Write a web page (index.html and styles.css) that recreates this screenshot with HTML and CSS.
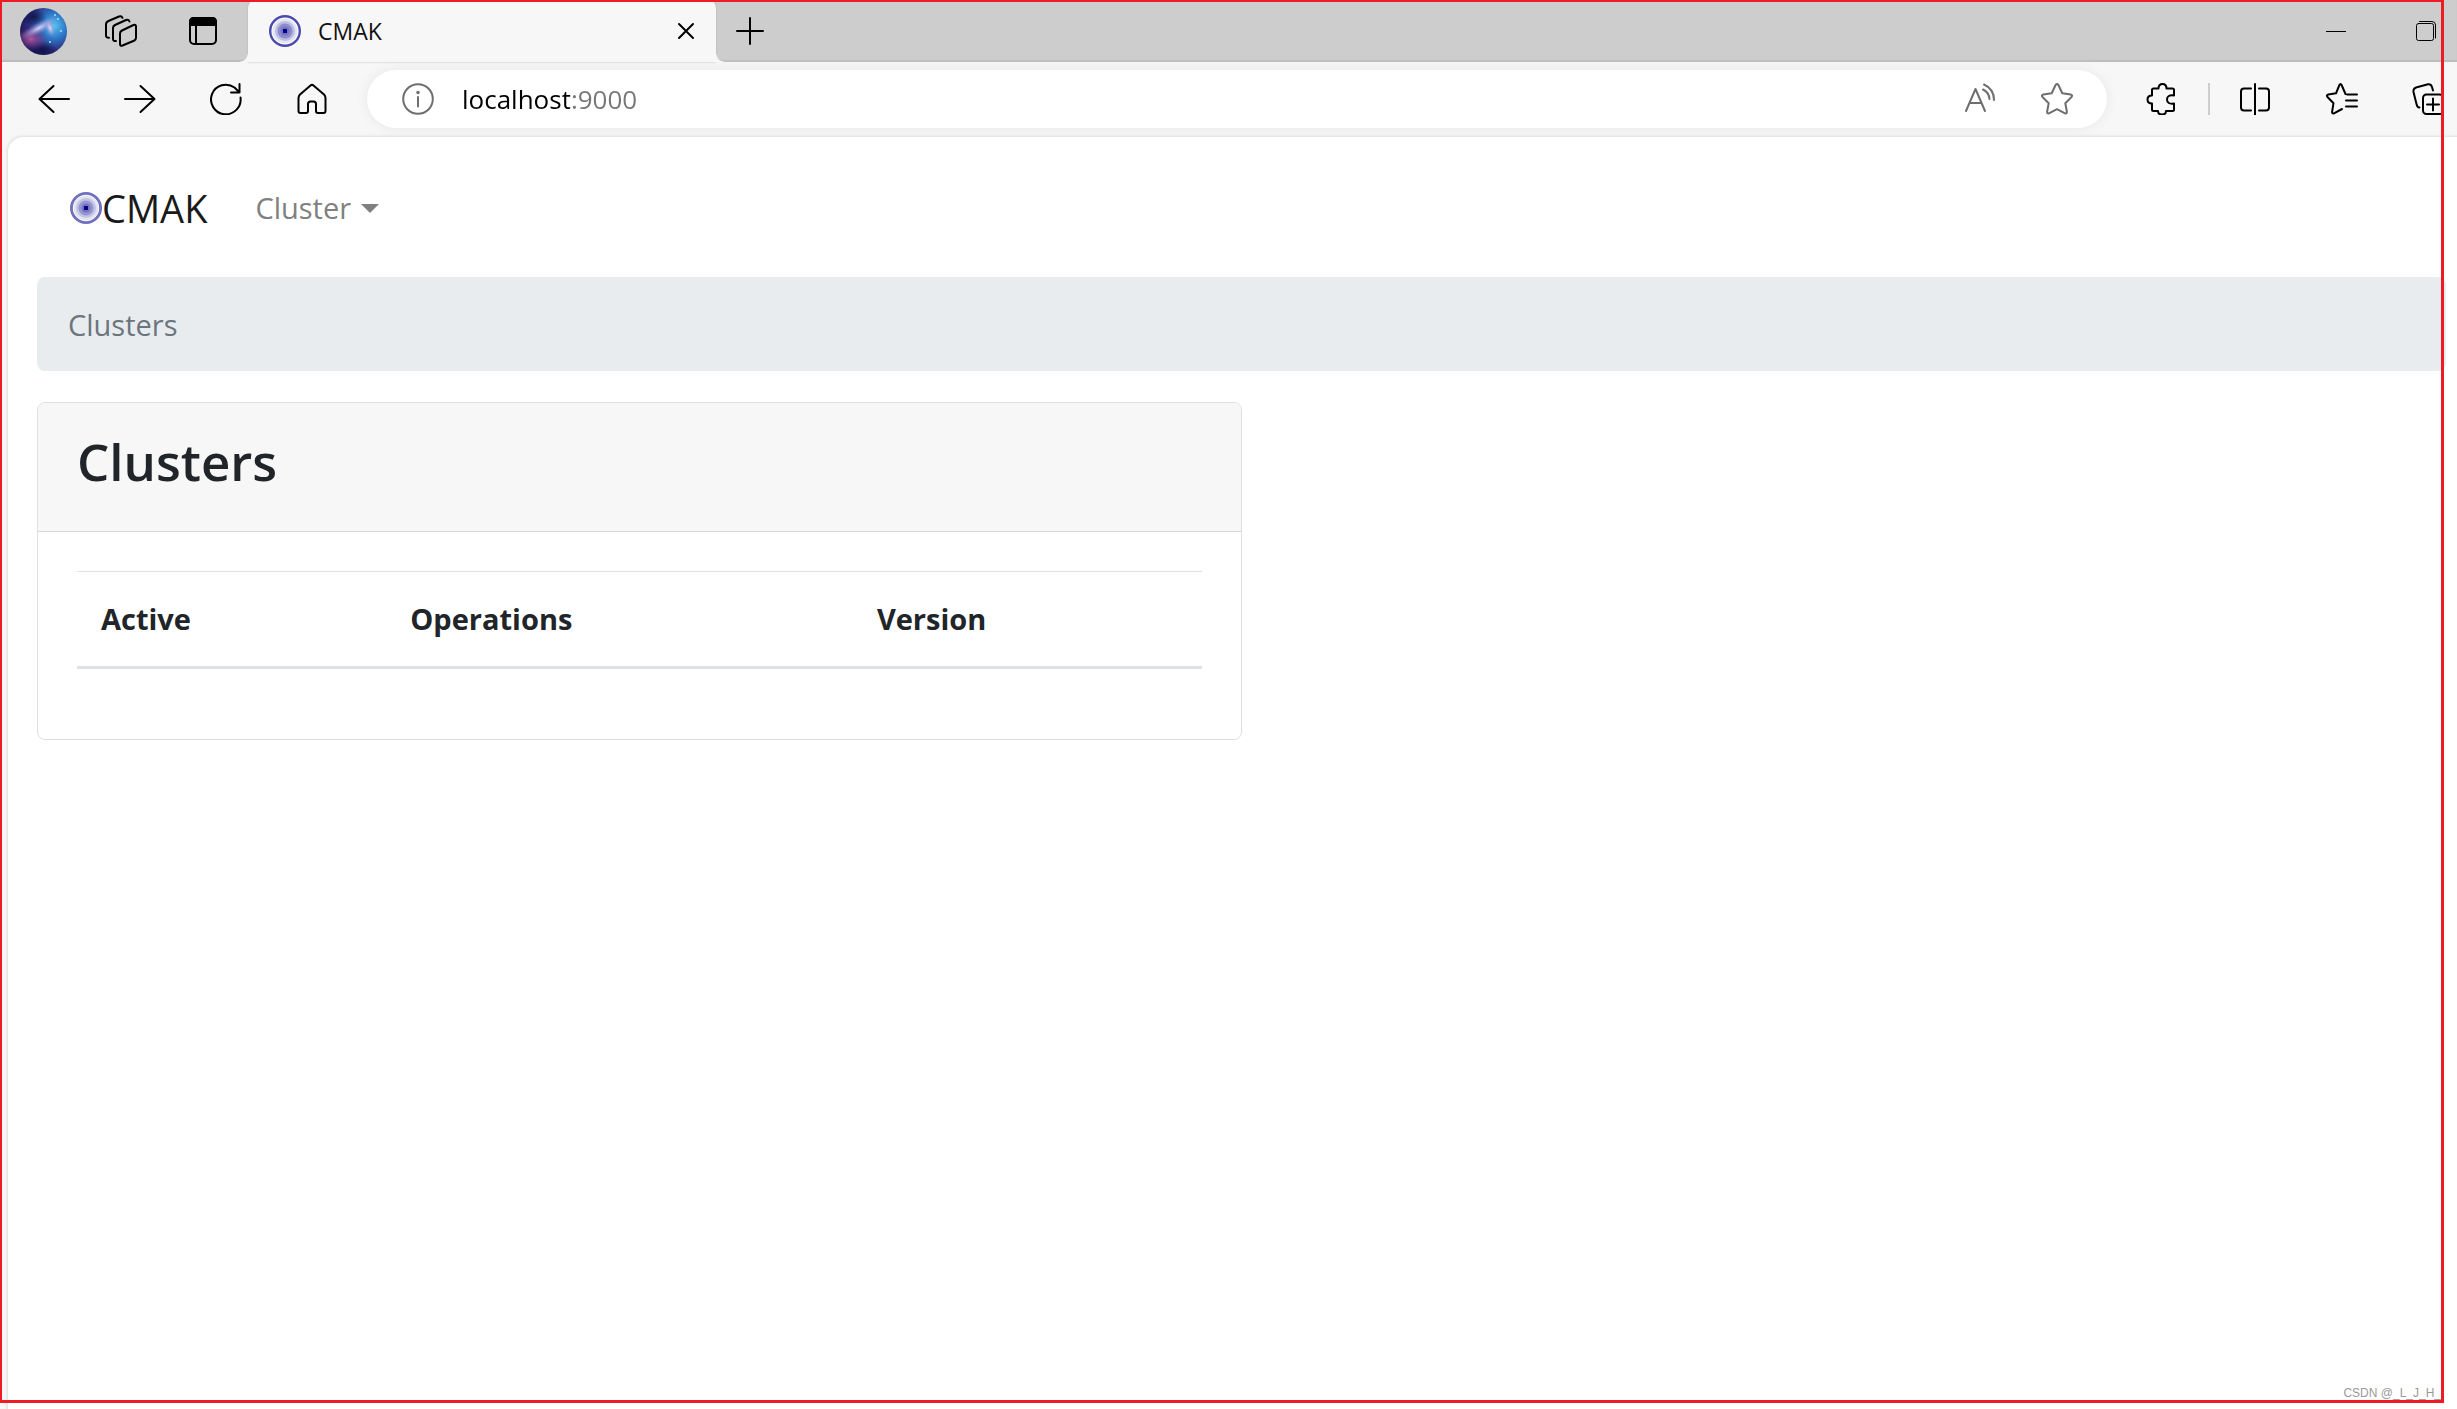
FILE: index.html
```html
<!DOCTYPE html>
<html lang="en">
<head>
<meta charset="utf-8">
<title>CMAK</title>
<link rel="stylesheet" href="styles.css">
</head>
<body>
<svg class="defs" aria-hidden="true">
  <defs>
    <radialGradient id="sky" cx="72%" cy="38%" r="75%">
      <stop offset="0" stop-color="#58c4f0"/><stop offset=".35" stop-color="#2f78c8"/><stop offset=".7" stop-color="#2d2d80"/><stop offset="1" stop-color="#1b1650"/>
    </radialGradient>
    <radialGradient id="dust"><stop offset="0" stop-color="#b8579f" stop-opacity=".95"/><stop offset="1" stop-color="#70307c" stop-opacity="0"/></radialGradient>
    <radialGradient id="glow"><stop offset="0" stop-color="#ecdcf8" stop-opacity=".95"/><stop offset="1" stop-color="#8a7fd0" stop-opacity="0"/></radialGradient>
    <radialGradient id="night"><stop offset="0" stop-color="#0b0d3c" stop-opacity=".8"/><stop offset="1" stop-color="#0b0d3c" stop-opacity="0"/></radialGradient>
  </defs>
</svg>
<div class="window">
  <header class="titlebar">
    <button class="avatar" aria-label="Profile">
      <svg width="47" height="47" viewBox="0 0 47 47">
        <clipPath id="disc"><circle cx="23.5" cy="23.5" r="23.5"/></clipPath>
        <g clip-path="url(#disc)">
          <rect width="47" height="47" fill="url(#sky)"/>
          <ellipse cx="23" cy="42" rx="15" ry="9" fill="url(#night)"/>
          <ellipse cx="14" cy="9" rx="13" ry="9" fill="url(#night)"/>
          <ellipse cx="11" cy="31" rx="17" ry="12" fill="url(#dust)"/>
          <ellipse cx="19" cy="20" rx="22" ry="6" transform="rotate(-28 19 20)" fill="url(#glow)"/>
          <ellipse cx="30" cy="20" rx="5" ry="10" transform="rotate(-20 30 20)" fill="url(#glow)"/>
          <g fill="#9fe4ff"><circle cx="38" cy="11" r="1"/><circle cx="41" cy="23" r="1"/><circle cx="30" cy="34" r="1"/><circle cx="35" cy="7" r="1"/></g>
        </g>
      </svg>
    </button>
    <button class="tool workspaces" aria-label="Workspaces">
      <svg class="line" width="32" height="32" viewBox="0 0 32 32">
        <path d="M17 15.500 28.500 10Q31 9 31 11.500V22.500Q31 24.500 29.500 25.500L17.500 30.500Q15 31.300 15 29V18.500Q15 16.500 17 15.500Z"/>
        <path d="M24.500 6.500Q23.500 4 21 5L10 10Q8 11 8 13V24Q8 26.500 11 26M17.500 2.800Q16.500.5 14 1.500L3.500 6Q1 7 1 9.500V20.500Q1 23 4 22.800"/>
      </svg>
    </button>
    <button class="tool" aria-label="Tab actions">
      <svg class="line" width="28" height="28" viewBox="0 0 28 28">
        <rect x="1" y="1" width="26" height="26" rx="4"/><path d="M7 8V27"/><path class="solid" d="M1 8V5Q1 1 5 1H23Q27 1 27 5V8Z"/>
      </svg>
    </button>
    <div class="tab">
      <svg width="32" height="32" viewBox="0 0 32 32">
        <circle cx="16" cy="16" r="14.800" fill="#fff" stroke="#4a4aac" stroke-width="2.400"/>
        <circle cx="16" cy="16" r="12.500" fill="#e5e5f5"/><circle cx="16" cy="16" r="10" fill="#bdbde3"/><circle cx="16" cy="16" r="7.500" fill="#8c8ccc"/><circle cx="16" cy="16" r="4.500" fill="#7373c2"/><rect x="14" y="14" width="4" height="4" fill="#00008b"/>
      </svg>
      <span class="tab-title">CMAK</span>
      <button class="close" aria-label="Close tab">
        <svg class="line" width="18" height="18" viewBox="0 0 18 18"><path d="M2 2 16 16M16 2 2 16"/></svg>
      </button>
    </div>
    <button class="new-tab" aria-label="New tab">
      <svg class="line" width="28" height="28" viewBox="0 0 28 28"><path d="M14 1V27M1 14H27"/></svg>
    </button>
    <div class="window-controls">
      <button class="minimise" aria-label="Minimise"><svg width="20" height="20" viewBox="0 0 20 20"><path d="M0 10H20V11H0Z"/></svg></button>
      <button class="edge restore" aria-label="Restore">
        <svg class="hair" width="20" height="20" viewBox="0 0 20 20"><rect x=".5" y="2.500" width="17" height="17" rx="2"/><path d="M3.500.5H16Q19.500.5 19.500 4V17"/></svg>
      </button>
    </div>
  </header>

  <div class="toolbar">
    <button class="nav-btn" aria-label="Back"><svg class="line" width="32" height="32" viewBox="0 0 32 32"><path d="M15.500 3 1.500 16 15.500 29M1.500 16H31"/></svg></button>
    <button class="nav-btn" aria-label="Forward"><svg class="line" width="32" height="32" viewBox="0 0 32 32"><path d="M16.500 3 30.500 16 16.500 29M30.500 16H1"/></svg></button>
    <button class="nav-btn" aria-label="Refresh"><svg class="line" width="32" height="32" viewBox="0 0 32 32"><path d="M30.500 14.500A14.800 14.800 0 1 1 24.500 4.500L29.500 9.500M29.500 1V9.500H21"/></svg></button>
    <button class="nav-btn" aria-label="Home"><svg class="line" width="32" height="32" viewBox="0 0 32 32"><path d="M14.500 2.500Q16 1 17.500 2.500L28 11.500Q29.500 13 29.500 15V28Q29.500 30 27.500 30H22Q20 30 20 28V21Q20 18.500 17.500 18.500H14.500Q12 18.500 12 21V28Q12 30 10 30H4.500Q2.500 30 2.500 28V15Q2.500 13 4 11.500Z"/></svg></button>
    <div class="address">
      <button class="address-btn" aria-label="Site information"><svg class="line muted" width="32" height="32" viewBox="0 0 32 32"><circle cx="16" cy="16" r="14.800"/><path d="M16 14V23.500"/><circle class="solid" cx="16" cy="9.500" r=".8"/></svg></button>
      <input class="url" type="text" value="localhost:9000" aria-label="Address" spellcheck="false">
      <button class="address-btn" aria-label="Read aloud"><svg class="line muted" width="32" height="32" viewBox="0 0 32 32"><path d="M3 28 12.500 6 22 28M6.500 20H18.500M20 6.500Q26 9.500 26.500 16M21 1.500Q31 6 31 17"/></svg></button>
      <button class="address-btn" aria-label="Add to favourites"><svg class="line muted" width="32" height="32" viewBox="0 0 32 32"><path d="M14.600 2Q16 0 17.400 2L21.300 10.300 29.700 11.500Q32 12.200 30.500 14L24.300 20.200 25.900 28.800Q26 31 24 30.300L16 26.200 8 30.300Q6 31 6.100 28.800L7.700 20.200 1.500 14Q0 12.200 2.300 11.500L10.700 10.300Z"/></svg></button>
    </div>
    <button class="nav-btn" aria-label="Extensions"><svg class="line" width="32" height="32" viewBox="0 0 32 32"><path d="M7.500 5.500H12.500Q12.500 1 16.500 1T20.500 5.500H26.500Q28 5.500 28 7V12.500Q21 11.500 21 16.500T28 20.500V26.500Q28 28 26.500 28H20Q20 31.500 16 31.500T12 28H7.500Q6 28 6 26.500V20.500Q1.500 20.500 1.500 16.500T6 12.500V7Q6 5.500 7.500 5.500Z"/></svg></button>
    <span class="divider"></span>
    <button class="nav-btn" aria-label="Split screen"><svg class="line" width="32" height="32" viewBox="0 0 32 32"><path d="M12 5.500H5Q2 5.500 2 8.500V24.500Q2 27.500 5 27.500H12M20 5.500H27Q30 5.500 30 8.500V24.500Q30 27.500 27 27.500H20M16 1V32"/></svg></button>
    <button class="nav-btn favourites" aria-label="Favourites"><svg class="line" width="32" height="32" viewBox="0 0 32 32"><path d="M19.500 11 15.600 2Q14.500 0 13.400 2L10 10.300 2.300 11.500Q0 12.200 1.500 14L7.500 20.200 6.100 28.800Q6 31 8 30.300L16 26M21 11.500H31M20 17.500H31M20 23.500H31"/></svg></button>
    <button class="edge collections" aria-label="Collections"><svg class="line" width="32" height="32" viewBox="0 0 32 32"><rect x="11" y="11.500" width="20" height="19.500" rx="3.500"/><path d="M21 15.500V27.500M15 21.500H27M7.500 24.500Q5.500 25 4.500 21L1.500 9Q1 5.500 4 4.500L16 1.300Q19 .8 20 4L21 7.500"/></svg></button>
  </div>

  <div class="viewport">
    <nav class="navbar">
      <a class="brand" href="#"><svg width="32" height="32" viewBox="0 0 32 32">
        <circle cx="16" cy="16" r="14.600" fill="#fff" stroke="#7070bd" stroke-width="2.800"/>
        <circle cx="16" cy="16" r="12.500" fill="#e3e3f4"/><circle cx="16" cy="16" r="10" fill="#c3c3e5"/><circle cx="16" cy="16" r="7.500" fill="#9696d0"/><circle cx="16" cy="16" r="4.500" fill="#7373c2"/><rect x="14" y="14" width="4" height="4" fill="#00008b"/>
      </svg>CMAK</a>
      <button class="dropdown" aria-haspopup="true">Cluster<span class="caret"></span></button>
    </nav>
    <ol class="breadcrumb"><li>Clusters</li></ol>
    <section class="card">
      <h1 class="card-header">Clusters</h1>
      <div class="card-body">
        <table class="table">
          <colgroup><col class="col-active"><col class="col-operations"><col></colgroup>
          <thead><tr><th scope="col">Active</th><th scope="col">Operations</th><th scope="col">Version</th></tr></thead>
          <tbody></tbody>
        </table>
      </div>
    </section>
  </div>
  <div class="frame"><span class="watermark">CSDN @_L_J_H_</span></div>
</div>
</body>
</html>
```
FILE: styles.css
```css
* { box-sizing: border-box; }

body {
  margin: 0;
  font-family: "Open Sans", "Noto Sans", sans-serif;
  font-size: 29px;
  line-height: 46px;
  color: #212529;
  background: #f7f7f7;
}

button {
  display: flex;
  flex: none;
  align-items: center;
  justify-content: center;
  padding: 0;
  border: 0;
  background: none;
  font: inherit;
  color: inherit;
}

svg { display: block; flex: none; }
.defs { position: absolute; width: 0; height: 0; }

.line, .hair {
  fill: none;
  stroke: #000;
  stroke-width: 2;
  stroke-linecap: round;
  stroke-linejoin: round;
}
.hair { stroke-width: 1; }
.line .solid { fill: #000; }
.muted { stroke: #6e6e6e; }
.muted .solid { fill: #6e6e6e; }

.window {
  position: relative;
  display: flex;
  flex-direction: column;
  min-height: 100vh;
}

/* Tab strip */
.titlebar {
  display: flex;
  height: 62px;
  padding: 0 16px 0 20px;
  background: #cdcdcd;
  box-shadow: inset 0 -2px 1px #bdbdbd;
}
.avatar { width: 47px; }
.tool { width: 82px; }
.workspaces { margin-left: 13px; }
.tab {
  position: relative;
  display: flex;
  align-items: center;
  width: 468px;
  margin-left: 4px;
  padding: 0 21px;
  background: #f7f7f7;
  border-radius: 8px 8px 0 0;
  box-shadow: 0 0 2px #aaa;
}
/* Curved feet that join the tab to the toolbar */
.tab::before,
.tab::after {
  content: "";
  position: absolute;
  bottom: 0;
  width: 8px;
  height: 8px;
}
.tab::before {
  right: 100%;
  background: radial-gradient(circle at 0 0, transparent 7px, #f7f7f7 8px);
}
.tab::after {
  left: 100%;
  background: radial-gradient(circle at 100% 0, transparent 7px, #f7f7f7 8px);
}
.tab-title {
  flex: 1;
  padding-left: 17px;
  font-size: 23px;
  color: #111;
}
.new-tab { width: 68px; }
.window-controls { display: flex; margin-left: auto; }
.minimise { width: 90px; }
.edge {
  width: 60px;
  overflow: hidden;
  justify-content: flex-start;
}
.restore { padding-left: 35px; }

/* Toolbar */
.toolbar {
  display: flex;
  align-items: center;
  height: 74px;
  padding: 0 16px 0 11px;
}
.nav-btn { width: 86px; height: 58px; }
.address {
  display: flex;
  flex: 1;
  align-items: center;
  height: 58px;
  margin: 0 12px;
  padding: 0 11px 0 12px;
  background: #fff;
  border-radius: 29px;
  box-shadow: 0 0 12px #e6e6e6;
}
.address-btn { width: 78px; }
.url {
  flex: 1;
  min-width: 0;
  padding: 0 0 0 5px;
  border: 0;
  font: inherit;
  font-size: 26px;
  color: transparent;
  background: linear-gradient(90deg, #000 113px, #767676 113px);
  background-clip: text;
}
.divider {
  width: 2px;
  height: 32px;
  margin: 0 2px 0 3px;
  background: #cdcdcd;
}
.favourites { margin-left: 1px; }
.collections { width: 56px; padding-left: 27px; }

/* Page */
.viewport {
  flex: 1;
  margin-left: 7px;
  padding: 0 11px 0 29px;
  background: #fff;
  border: solid #e6e6e6;
  border-width: 1px 0 0 1px;
  border-radius: 16px 0 0 0;
  box-shadow: 0 0 3px #ddd;
}
.navbar {
  display: flex;
  align-items: center;
  height: 140px;
  padding: 2px 33px 0;
}
.brand {
  display: flex;
  align-items: center;
  margin-right: 48px;
  font-size: 38px;
  color: #1a1a1a;
  text-decoration: none;
}
.dropdown { color: #808080; }
.caret {
  margin-left: 10px;
  border: 9px solid transparent;
  border-top-color: #808080;
  border-bottom: 0;
}
.breadcrumb {
  margin: 0 0 31px;
  padding: 25px 31px 23px;
  list-style: none;
  color: #6c757d;
  background: #e8ecef;
  border-radius: 8px;
}
.card {
  width: 50%;
  overflow: hidden;
  border: 1px solid #dfdfdf;
  border-radius: 8px;
}
.card-header {
  margin: 0;
  padding: 24px 39px 36px;
  font-size: 51px;
  font-weight: 600;
  line-height: 68px;
  background: #f7f7f7;
  border-bottom: 1px solid #d9d9d9;
}
.card-body { padding: 39px; }
.table {
  width: 100%;
  margin-bottom: 31px;
  table-layout: fixed;
  border-spacing: 0;
}
.col-active { width: 27.5%; }
.col-operations { width: 41.5%; }
.table th {
  padding: 24px;
  text-align: left;
  font-weight: 700;
  border-top: 1px solid #dee2e6;
  border-bottom: 3px solid #dee2e6;
}

/* Red outline over the whole window */
.frame {
  position: absolute;
  inset: 0 13px 6px 0;
  display: flex;
  align-items: flex-end;
  justify-content: flex-end;
  border: solid #ed1c24;
  border-width: 2px 3px 3px 2px;
  pointer-events: none;
}
.watermark {
  font: 12px/14px "Liberation Sans", Arial, sans-serif;
  color: #999;
}
```
